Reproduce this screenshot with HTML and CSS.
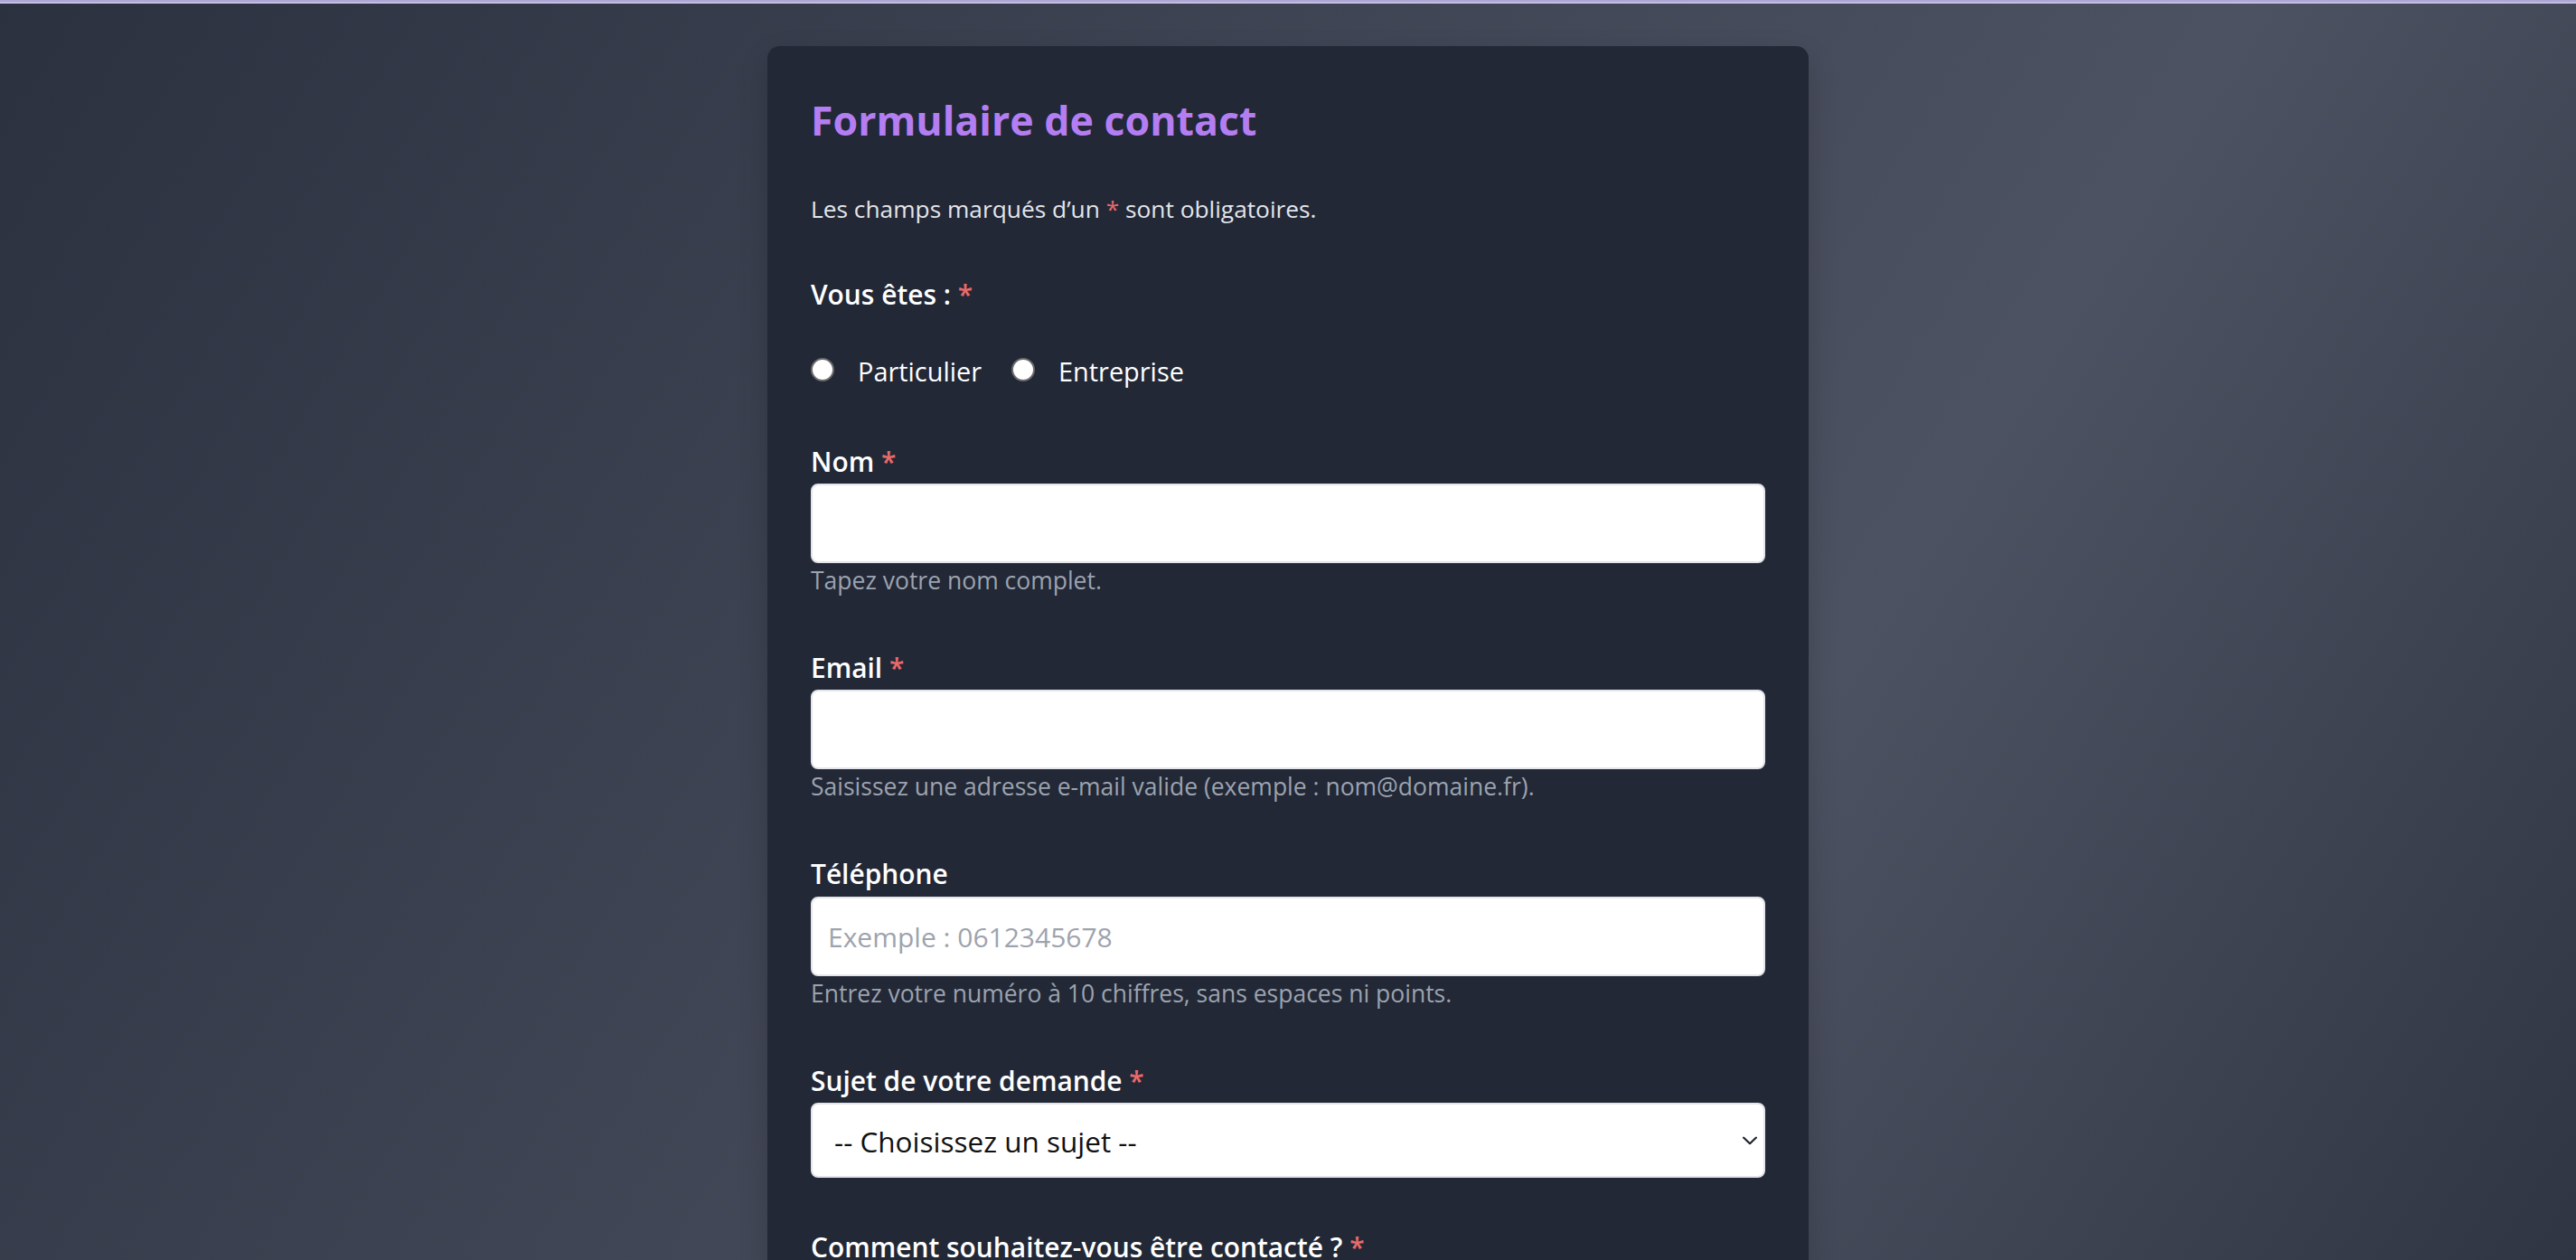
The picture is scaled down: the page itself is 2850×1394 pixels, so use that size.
FILE: index.html
```html
<!DOCTYPE html>
<html lang="fr">
<head>
<meta charset="utf-8">
<title>Formulaire de contact</title>
<link rel="stylesheet" href="styles.css">
</head>
<body>
<div class="topbar"></div>
<main class="page">
  <form class="card">
    <h1 class="title">Formulaire de contact</h1>
    <p class="intro">Les champs marqués d’un <span class="req">*</span> sont obligatoires.</p>

    <div class="choice">
      <p class="label">Vous êtes : <span class="req">*</span></p>
      <div class="radios radios-type">
        <label class="radio"><input type="radio" name="type"><span>Particulier</span></label>
        <label class="radio"><input type="radio" name="type"><span>Entreprise</span></label>
      </div>
    </div>

    <div class="group">
      <label class="label" for="nom">Nom <span class="req">*</span></label>
      <input class="field" id="nom" type="text">
      <p class="hint">Tapez votre nom complet.</p>
    </div>

    <div class="group">
      <label class="label" for="email">Email <span class="req">*</span></label>
      <input class="field" id="email" type="email">
      <p class="hint">Saisissez une adresse e-mail valide (exemple : nom@domaine.fr).</p>
    </div>

    <div class="group">
      <label class="label" for="tel">Téléphone</label>
      <input class="field" id="tel" type="tel" placeholder="Exemple : 0612345678">
      <p class="hint">Entrez votre numéro à 10 chiffres, sans espaces ni points.</p>
    </div>

    <div class="group">
      <label class="label" for="sujet">Sujet de votre demande <span class="req">*</span></label>
      <div class="select-wrap">
        <select class="field select" id="sujet">
          <option>-- Choisissez un sujet --</option>
          <option>Information</option>
          <option>Devis</option>
          <option>Réclamation</option>
        </select>
        <svg class="chevron" width="16" height="9" viewBox="0 0 16 9" aria-hidden="true">
          <path d="M1 1 L8 7.8 L15 1" fill="none" stroke="#1f2430" stroke-width="2.2" stroke-linecap="round" stroke-linejoin="round"/>
        </svg>
      </div>
    </div>

    <div class="group">
      <p class="label">Comment souhaitez-vous être contacté ? <span class="req">*</span></p>
      <div class="radios">
        <label class="radio"><input type="radio" name="contact"><span>Par email</span></label>
        <label class="radio"><input type="radio" name="contact"><span>Par téléphone</span></label>
      </div>
    </div>

    <div class="group">
      <label class="label" for="message">Message <span class="req">*</span></label>
      <textarea class="field area" id="message"></textarea>
    </div>

    <button class="submit" type="submit">Envoyer</button>
  </form>
</main>
</body>
</html>
```

FILE: styles.css
```css
html, body {
  height: 100%;
  overflow: hidden;
}

html {
  background: linear-gradient(122deg, #2b313f 0%, #4d5262 67%, #303543 100%) fixed;
}

body {
  margin: 0;
  font-family: "Open Sans", "Noto Sans", sans-serif;
  color: #f3f4f6;
}

.topbar {
  height: 4px;
  background: linear-gradient(to bottom, #aea6d4 0 50%, #c4bee2 50% 100%);
}

.page {
  padding-top: 47px;
}

.card {
  width: 1152px;
  box-sizing: border-box;
  margin: 0 auto;
  padding: 55px 48px 48px;
  background: #222836;
  border-radius: 14px;
  box-shadow: 0 12px 32px rgba(0, 0, 0, 0.16);
}

.title {
  margin: 0;
  font-size: 44.7px;
  line-height: 54px;
  font-weight: 700;
  color: #b47ef2;
}

.intro {
  margin: 52.4px 0 0;
  font-size: 26.3px;
  line-height: 39px;
  color: #e2e5ea;
}

.req {
  color: #ea6a6a;
}

.label {
  display: block;
  margin: 0;
  font-size: 29.9px;
  line-height: 40px;
  font-weight: 600;
  color: #ffffff;
}

.choice {
  margin-top: 54.35px;
}

.radios {
  display: flex;
  align-items: center;
  gap: 33px;
  margin-top: 4px;
}

.radios-type {
  margin-top: 45px;
  margin-bottom: 60px;
}

.radio {
  display: flex;
  align-items: center;
  gap: 26px;
  font-size: 28.9px;
  line-height: 40px;
  color: #ffffff;
}

.radio input {
  appearance: none;
  -webkit-appearance: none;
  margin: 0 0 3px;
  width: 26px;
  height: 26px;
  box-sizing: border-box;
  border: 2px solid #6c6c6c;
  border-radius: 50%;
  background: #ffffff;
  flex: none;
}

.group {
  margin-bottom: 57.1px;
}

.group .label {
  margin-bottom: 4.25px;
}

.field {
  display: block;
  width: 100%;
  height: 88px;
  box-sizing: border-box;
  margin: 0;
  padding: 2px 17px 0;
  border: 2px solid #e3e5ea;
  border-radius: 8px;
  background: #ffffff;
  font-family: "Open Sans", "Noto Sans", sans-serif;
  font-size: 30px;
  color: #111827;
  outline: none;
}

.field::placeholder {
  color: #9ea3ad;
}

.hint {
  margin: 0;
  font-size: 26.5px;
  line-height: 39px;
  color: #9ca3af;
}

.select-wrap {
  position: relative;
}

.select {
  appearance: none;
  -webkit-appearance: none;
  height: 83px;
  padding: 2px 48px 0 24px;
  font-size: 31.5px;
  color: #111111;
}

.chevron {
  position: absolute;
  right: 9px;
  top: 50%;
  transform: translateY(-50%);
}

.area {
  height: 220px;
  padding: 16px 17px;
  resize: vertical;
}

.submit {
  padding: 20px 48px;
  border: 0;
  border-radius: 8px;
  background: #9f67e8;
  color: #ffffff;
  font-family: "Open Sans", "Noto Sans", sans-serif;
  font-size: 29px;
  font-weight: 600;
}
```
